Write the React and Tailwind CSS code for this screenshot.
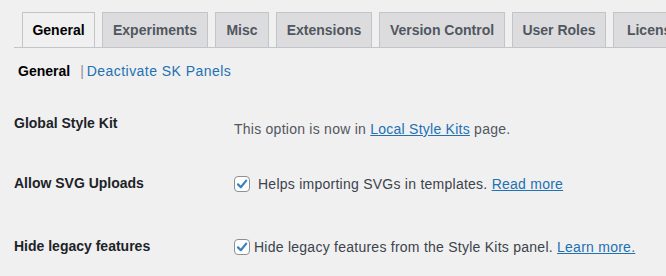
import React from 'react'

const tabs = [
  { label: 'General', w: 'w-[73px]', active: true },
  { label: 'Experiments', w: 'w-[106px]' },
  { label: 'Misc', w: 'w-[54px]' },
  { label: 'Extensions', w: 'w-[96px]' },
  { label: 'Version Control', w: 'w-[126px]' },
  { label: 'User Roles', w: 'w-[94px]' },
  { label: 'License', w: 'w-[80px]' },
]

function Checkbox() {
  return (
    <span className="inline-flex h-4 w-4 shrink-0 items-center justify-center rounded-[4px] border border-[#8c8f94] bg-white">
      <svg width="14" height="14" viewBox="0 0 14 14" fill="none">
        <path
          d="M3 7.4 L5.8 10.2 L11.2 3.6"
          stroke="#3582c4"
          strokeWidth="2.2"
          strokeLinecap="round"
          strokeLinejoin="round"
        />
      </svg>
    </span>
  )
}

function Row({ title, thPad, tdPad, height, children }) {
  return (
    <div className={`flex ${height}`}>
      <div className={`w-[220px] shrink-0 ${thPad} text-[14px] font-bold leading-[18px] text-[#1d2327]`}>
        {title}
      </div>
      <div className={`${tdPad} flex items-center text-[14px] leading-[20px] tracking-[0.25px] text-[#3c434a]`}>
        {children}
      </div>
    </div>
  )
}

export default function App() {
  return (
    <div
      className="h-[276px] w-[666px] overflow-hidden whitespace-nowrap bg-[#f0f0f1] pl-[14px]"
      style={{ fontFamily: '"Liberation Sans", Arial, sans-serif' }}
    >
      <div className="flex items-end gap-[7px] overflow-hidden border-b border-[#c3c4c7] pl-2 pt-3">
        {tabs.map((t) => (
          <div
            key={t.label}
            className={`${t.w} -mb-px flex h-[36px] shrink-0 items-center border border-[#c3c4c7] px-[10px] text-[14px] font-bold ${
              t.active
                ? 'justify-center border-b-[#f0f0f1] bg-[#f0f0f1] text-black'
                : 'justify-center bg-[#dcdcde] text-[#50575e]'
            }`}
          >
            {t.label}
          </div>
        ))}
      </div>

      <div className="mt-[13px] flex items-center pl-1 text-[14px] leading-[20px]">
        <span className="font-bold text-black">General</span>
        <span className="ml-[10px] mr-[3px] text-[#8c8f94]">|</span>
        <a className="tracking-[0.45px] text-[#2271b1]">Deactivate SK Panels</a>
      </div>

      <Row title="Global Style Kit" height="h-[80px]" thPad="pt-[33px]" tdPad="pt-[38px] h-[58px]">
        <span className="text-[#50575e]">
          This option is now in{' '}
          <a className="text-[#2271b1] underline">Local Style Kits</a> page.
        </span>
      </Row>

      <Row title="Allow SVG Uploads" height="h-[62px]" thPad="pt-[13px]" tdPad="pt-[13px] h-[33px]">
        <Checkbox />
        <span className="ml-[8px]">
          Helps importing SVGs in templates.{' '}
          <a className="text-[#2271b1] underline">Read more</a>
        </span>
      </Row>

      <Row title="Hide legacy features" height="h-[50px]" thPad="pt-[14px]" tdPad="pt-[14px] h-[34px]">
        <Checkbox />
        <span className="ml-[4px]">
          Hide legacy features from the Style Kits panel.{' '}
          <a className="text-[#2271b1] underline">Learn more.</a>
        </span>
      </Row>
    </div>
  )
}
